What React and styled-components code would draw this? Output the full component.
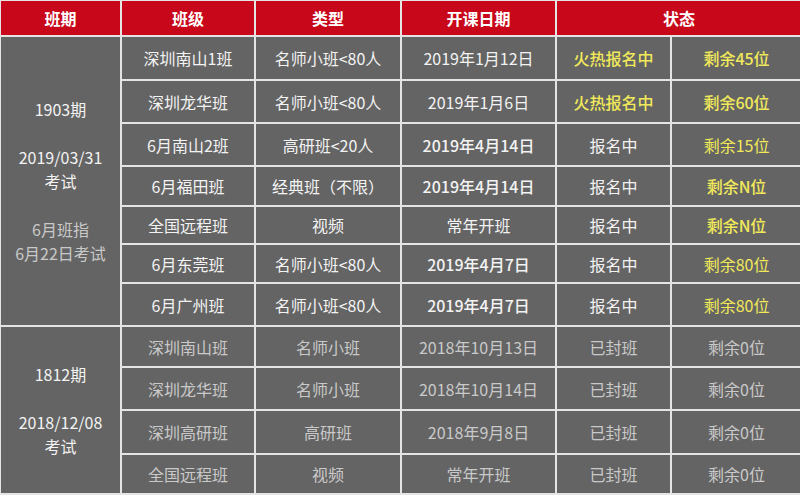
import React from 'react'
import styled, { createGlobalStyle } from 'styled-components'

const GlobalStyle = createGlobalStyle`
    html, body {
        margin: 0;
        padding: 0;
        background: #ffffff;
        overflow: hidden;
    }
    body {
        font-family: "Noto Sans CJK SC", "Noto Sans", sans-serif;
    }
`;

const colors = {
    red: '#c8071a',
    cell: '#646464',
    line: '#e4e4e4',
    text: '#f3f3f3',
    muted: '#c9c9c9',
    yellow: '#f1e95a',
};

const Table = styled.table`
    border-collapse: collapse;
    table-layout: fixed;
    width: 802px;
    margin: -1px 0 0 -1px;
    font-size: 16px;
    td, th {
        border: 2px solid ${colors.line};
        padding: 0;
        text-align: center;
        vertical-align: middle;
        white-space: nowrap;
    }
`;

const Head = styled.th`
    background: ${colors.red};
    color: #ffffff;
    font-weight: 700;
    height: 34px;
`;

const Cell = styled.td`
    background: ${colors.cell};
    color: ${p => p.$yellow ? colors.yellow : p.$muted ? colors.muted : colors.text};
    font-weight: ${p => p.$bold ? 500 : 400};
    height: ${p => p.$h - 2}px;
    line-height: 20px;
`;

const Period = styled.td`
    background: ${colors.cell};
    color: ${colors.text};
    line-height: 24px;
`;

const Note = styled.div`
    color: ${colors.muted};
`;

const Blank = styled.div`
    height: 24px;
`;

const current = [
    { h: 44, cls: '深圳南山1班', type: '名师小班<80人', date: '2019年1月12日', status: '火热报名中', hot: true, left: '剩余45位', leftBold: true },
    { h: 43, cls: '深圳龙华班', type: '名师小班<80人', date: '2019年1月6日', status: '火热报名中', hot: true, left: '剩余60位', leftBold: true },
    { h: 43, cls: '6月南山2班', type: '高研班<20人', date: '2019年4月14日', dateBold: true, status: '报名中', left: '剩余15位' },
    { h: 40, cls: '6月福田班', type: '经典班（不限）', date: '2019年4月14日', dateBold: true, status: '报名中', left: '剩余N位', leftBold: true },
    { h: 38, cls: '全国远程班', type: '视频', date: '常年开班', status: '报名中', left: '剩余N位', leftBold: true },
    { h: 39, cls: '6月东莞班', type: '名师小班<80人', date: '2019年4月7日', dateBold: true, status: '报名中', left: '剩余80位' },
    { h: 43, cls: '6月广州班', type: '名师小班<80人', date: '2019年4月7日', dateBold: true, status: '报名中', left: '剩余80位' },
];

const past = [
    { h: 41, cls: '深圳南山班', type: '名师小班', date: '2018年10月13日' },
    { h: 43, cls: '深圳龙华班', type: '名师小班', date: '2018年10月14日' },
    { h: 44, cls: '深圳高研班', type: '高研班', date: '2018年9月8日' },
    { h: 40, cls: '全国远程班', type: '视频', date: '常年开班' },
];

export default function App() {
    return (
        <>
            <GlobalStyle />
            <Table>
                <colgroup>
                    <col style={{ width: 121 }} />
                    <col style={{ width: 134 }} />
                    <col style={{ width: 146 }} />
                    <col style={{ width: 155 }} />
                    <col style={{ width: 115 }} />
                    <col style={{ width: 131 }} />
                </colgroup>
                <thead>
                    <tr>
                        <Head>班期</Head>
                        <Head>班级</Head>
                        <Head>类型</Head>
                        <Head>开课日期</Head>
                        <Head colSpan={2}>状态</Head>
                    </tr>
                </thead>
                <tbody>
                    {current.map((row, i) => (
                        <tr key={'c' + i}>
                            {i === 0 && (
                                <Period rowSpan={current.length}>
                                    <div>1903期</div>
                                    <Blank />
                                    <div>2019/03/31</div>
                                    <div>考试</div>
                                    <Blank />
                                    <Note>6月班指</Note>
                                    <Note>6月22日考试</Note>
                                </Period>
                            )}
                            <Cell $h={row.h}>{row.cls}</Cell>
                            <Cell $h={row.h}>{row.type}</Cell>
                            <Cell $h={row.h} $bold={row.dateBold}>{row.date}</Cell>
                            <Cell $h={row.h} $yellow={row.hot} $bold={row.hot}>{row.status}</Cell>
                            <Cell $h={row.h} $yellow $bold={row.leftBold}>{row.left}</Cell>
                        </tr>
                    ))}
                    {past.map((row, i) => (
                        <tr key={'p' + i}>
                            {i === 0 && (
                                <Period rowSpan={past.length}>
                                    <div>1812期</div>
                                    <Blank />
                                    <div>2018/12/08</div>
                                    <div>考试</div>
                                </Period>
                            )}
                            <Cell $h={row.h} $muted>{row.cls}</Cell>
                            <Cell $h={row.h} $muted>{row.type}</Cell>
                            <Cell $h={row.h} $muted>{row.date}</Cell>
                            <Cell $h={row.h} $muted>已封班</Cell>
                            <Cell $h={row.h} $muted>剩余0位</Cell>
                        </tr>
                    ))}
                </tbody>
            </Table>
        </>
    )
}
